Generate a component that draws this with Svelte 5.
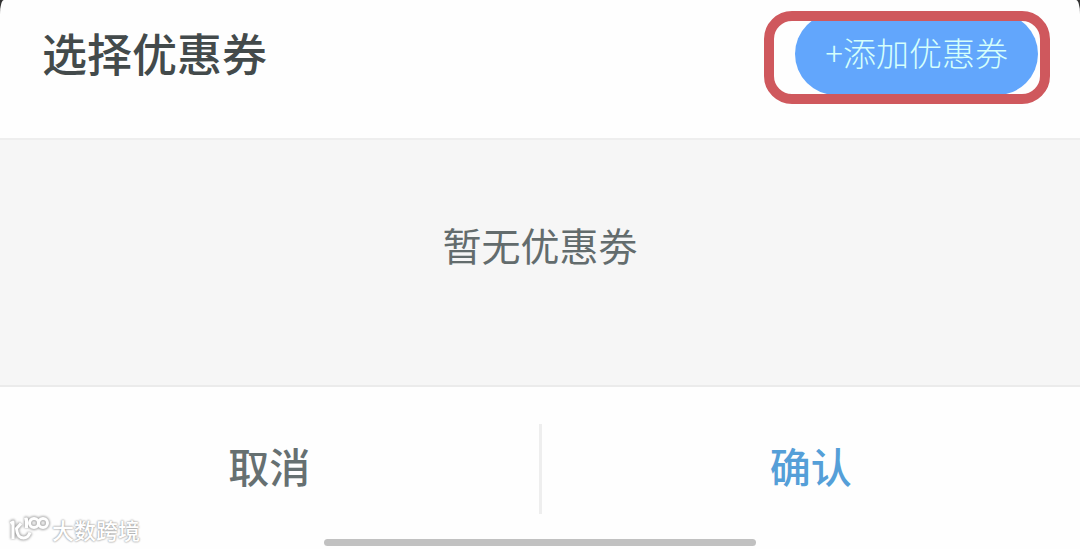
<script>
  let { title = '选择优惠券', emptyText = '暂无优惠劵' } = $props();
</script>

<main class="backdrop">
  <section class="sheet" aria-labelledby="sheet-title">
    <header>
      <h1 id="sheet-title">{title}</h1>
      <div class="add-wrap">
        <button class="add" type="button">+添加优惠券</button>
        <span class="ring" aria-hidden="true"></span>
      </div>
    </header>

    <div class="empty"><p>{emptyText}</p></div>

    <footer>
      <div class="actions">
        <button class="action" type="button">取消</button>
        <span class="divider"></span>
        <button class="action confirm" type="button">确认</button>
      </div>
      <div class="home-bar"></div>
      <div class="brand">
        <svg width="40" height="28" viewBox="0 0 40 28" aria-hidden="true">
          <defs>
            <g id="brand-mark">
              <path d="M2.500 8.500 5 7V24" />
              <path d="M13 8.500 8.500 13.500C9 19.500 11.500 23 15.500 23Q20 23 22 17.500" />
              <path d="M16.500 4.500 18.500 4V13" />
              <circle cx="26" cy="8" r="4.500" />
              <circle cx="35" cy="8" r="4.500" />
            </g>
          </defs>
          <use href="#brand-mark" class="halo" />
          <use href="#brand-mark" class="stroke" />
        </svg>
        <span>大数跨境</span>
      </div>
    </footer>
  </section>
</main>

<style>
  :global(body) {
    margin: 0;
    font-family: "Noto Sans CJK SC", sans-serif;
  }

  .backdrop {
    display: flex;
    min-height: 100vh;
    background: #333;
  }

  .sheet {
    display: flex;
    flex: 1;
    flex-direction: column;
    overflow: hidden;
    border-radius: 4px 4px 0 0 / 14px 14px 0 0;
    background: #fefefe;
  }

  header {
    display: flex;
    align-items: flex-start;
    justify-content: space-between;
    box-sizing: border-box;
    min-height: 138px;
    padding: 13px 42px 0;
  }

  h1 {
    margin: 0;
    color: #434a4b;
    font-size: 45px;
    font-weight: 500;
    line-height: 80px;
  }

  .add-wrap {
    position: relative;
  }

  .add {
    display: block;
    padding: 0 30px 4px;
    border: 0;
    border-radius: 41px;
    background: #62a6fc;
    color: #d5fffb;
    font-family: inherit;
    font-size: 33px;
    font-weight: 300;
    line-height: 78px;
  }

  .ring {
    position: absolute;
    inset: -2px -12px -9px -31px;
    border: 10px solid #cf585d;
    border-radius: 28px;
    pointer-events: none;
  }

  .empty {
    display: flex;
    flex: 1;
    justify-content: center;
    border-top: 2px solid #eee;
    border-bottom: 2px solid #ebebeb;
    background: #f6f6f6;
  }

  .empty p {
    margin: 74px 0 0;
    color: #636c6d;
    font-size: 39px;
    font-weight: 400;
    line-height: 60px;
  }

  footer {
    position: relative;
    display: flex;
    flex-direction: column;
    align-items: center;
    box-sizing: border-box;
    min-height: 162px;
    padding-top: 37px;
  }

  .actions {
    display: flex;
    width: 100%;
  }

  .action {
    flex: 1;
    padding: 0 0 8px;
    border: 0;
    background: none;
    color: #667071;
    font-family: inherit;
    font-size: 41px;
    font-weight: 500;
    line-height: 82px;
  }

  .confirm {
    color: #559fd8;
  }

  .divider {
    width: 3px;
    background: #eee;
  }

  .home-bar {
    width: 40%;
    height: 7px;
    margin-top: 25px;
    border-radius: 4px;
    background: #c1c1c1;
  }

  .brand {
    position: absolute;
    bottom: 5px;
    left: 8px;
    display: flex;
    align-items: center;
    gap: 4px;
    color: #fff;
    font-size: 22px;
    font-weight: 500;
    line-height: 30px;
    text-shadow: 0 0 2px #999, 0 0 2px #aaa;
  }

  .brand svg {
    overflow: visible;
  }

  .brand use {
    fill: none;
    stroke-linejoin: round;
  }

  .halo {
    filter: blur(1px);
    stroke: #aaa;
    stroke-width: 5px;
  }

  .stroke {
    stroke: #fff;
    stroke-width: 3px;
  }
</style>
